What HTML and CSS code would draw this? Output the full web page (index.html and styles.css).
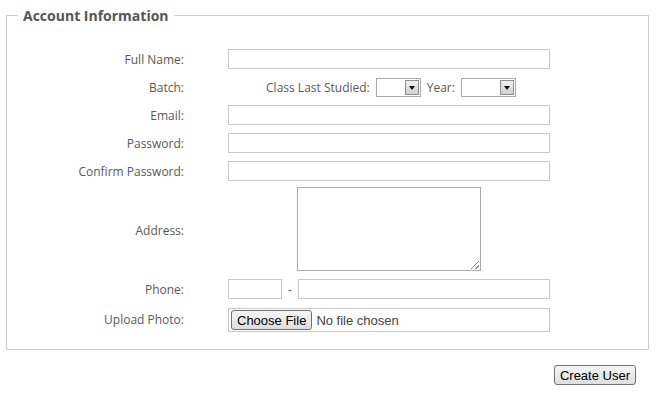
FILE: index.html
```html
<!DOCTYPE html>
<html lang="en">
<head>
  <meta charset="UTF-8" />
  <title>Create User</title>
  <link rel="stylesheet" href="styles.css">
</head>
<body>

  <form class="user-form">
    <fieldset>
      <legend>Account Information</legend>

      <div class="form-grid">
        <label>Full Name:</label>
        <span class="text-box"></span>

        <label>Batch:</label>
        <div class="batch">
          <span>Class Last Studied:</span>
          <span class="select small"><span class="select-btn"></span></span>
          <span>Year:</span>
          <span class="select wide"><span class="select-btn"></span></span>
        </div>

        <label>Email:</label>
        <span class="text-box"></span>

        <label>Password:</label>
        <span class="text-box"></span>

        <label>Confirm Password:</label>
        <span class="text-box"></span>

        <label>Address:</label>
        <div class="address">
          <span class="text-area"><span class="grip"></span></span>
        </div>

        <label>Phone:</label>
        <div class="phone">
          <span class="text-box code"></span>
          <span class="dash">-</span>
          <span class="text-box number"></span>
        </div>

        <label>Upload Photo:</label>
        <div class="upload">
          <button type="button" class="btn">Choose File</button>
          <span class="file-name">No file chosen</span>
        </div>
      </div>
    </fieldset>

    <div class="actions">
      <button type="button" class="btn">Create User</button>
    </div>
  </form>

</body>
</html>
```

FILE: styles.css
```css
body {
  margin: 0;
  font-family: 'Open Sans', sans-serif;
  font-size: 12px;
  color: #595959;
  background-color: #fff;
}

.user-form {
  padding: 0 14px 0 6px;
}

fieldset {
  margin: 6px 0 0 0;
  padding: 24px 0 17px 0;
  border: 1px solid #cfcfcf;
}

legend {
  margin-left: 11px;
  padding: 0 5px;
  font-size: 14px;
  font-weight: bold;
  color: #555;
}

.form-grid {
  display: grid;
  grid-template-columns: 177px 322px;
  column-gap: 44px;
  row-gap: 8px;
  align-items: center;
}

.form-grid label {
  text-align: right;
}

.text-box {
  display: block;
  height: 20px;
  box-sizing: border-box;
  border: 1px solid #c8c8c8;
  background-color: #fff;
}

.batch {
  display: flex;
  justify-content: center;
  align-items: center;
  height: 20px;
  gap: 6px;
  padding-left: 4px;
}

.select {
  display: flex;
  justify-content: flex-end;
  height: 19px;
  box-sizing: border-box;
  border: 1px solid #a9a9a9;
  background-color: #fff;
  padding: 1px;
}

.select.small {
  width: 45px;
}

.select.wide {
  width: 55px;
}

.select-btn {
  position: relative;
  width: 14px;
  box-sizing: border-box;
  border: 1px solid #8e8e8e;
  background: linear-gradient(#f2f2f2, #cfcfcf);
}

.select-btn::after {
  content: "";
  position: absolute;
  left: 3px;
  top: 5px;
  border-left: 3px solid transparent;
  border-right: 3px solid transparent;
  border-top: 4px solid #111;
}

.address {
  display: flex;
  justify-content: center;
  margin-top: -2px;
}

.text-area {
  position: relative;
  display: block;
  width: 184px;
  height: 84px;
  box-sizing: border-box;
  border: 1px solid #a9a9a9;
  background-color: #fff;
}

.grip {
  position: absolute;
  right: 1px;
  bottom: 1px;
  width: 8px;
  height: 8px;
  background: linear-gradient(135deg, transparent 45%, #888 45%, #888 55%, transparent 55%, transparent 75%, #888 75%, #888 85%, transparent 85%);
}

.phone {
  display: flex;
  align-items: center;
}

.phone .code {
  width: 54px;
}

.dash {
  width: 16px;
  text-align: center;
}

.phone .number {
  flex: 1;
}

.upload {
  display: flex;
  align-items: center;
  height: 24px;
  margin-top: 1px;
  box-sizing: border-box;
  border: 1px solid #c8c8c8;
  padding: 0 2px;
}

.btn {
  font-family: 'Liberation Sans', Arial, sans-serif;
  font-size: 13px;
  color: #000;
  height: 20px;
  padding: 0 5px;
  border: 1px solid #707070;
  border-radius: 3px;
  background: linear-gradient(#f6f6f6, #dedede);
}

.file-name {
  margin-left: 4px;
  font-family: 'Liberation Sans', Arial, sans-serif;
  font-size: 13px;
  color: #444;
}

.actions {
  display: flex;
  justify-content: flex-end;
  padding: 15px 13px 0 0;
}
```
